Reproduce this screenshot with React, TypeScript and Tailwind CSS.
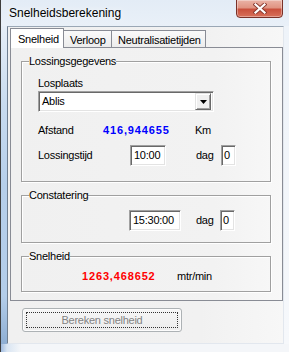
import React from 'react';

const sunken =
  'bg-white border border-t-[#a0a0a0] border-l-[#a0a0a0] border-r-white border-b-white shadow-[inset_1px_1px_0_#696969,inset_-1px_-1px_0_#e3e3e3]';

const GroupBox = ({ title, className = '', children }: { title: string; className?: string; children?: React.ReactNode }) => (
  <fieldset className={`ml-[10px] w-[250px] border border-[#a0a0a0] shadow-[inset_1px_1px_0_#fff,1px_1px_0_#fff] ${className}`}>
    <legend className="ml-[7px] h-[13px] leading-[13px]">{title}</legend>
    {children}
  </fieldset>
);

const CloseGlyph = () => (
  <svg width="14" height="11" viewBox="0 0 14 11">
    <path d="M2.5 1.5 L11.5 9.5 M11.5 1.5 L2.5 9.5" stroke="#8a3a30" strokeWidth="4" strokeLinecap="square" />
    <path d="M2.5 1.5 L11.5 9.5 M11.5 1.5 L2.5 9.5" stroke="#ffffff" strokeWidth="2.2" strokeLinecap="square" />
  </svg>
);

export default function App() {
  return (
    <div className="w-[289px] h-[352px] overflow-hidden flex flex-col border-l border-[#3d3d3d] bg-[#eef3f9] text-black text-[11px] tracking-[-0.25px] leading-[13px] font-['Liberation_Sans',Arial,sans-serif]">
      {/* title bar */}
      <div className="h-[26px] flex items-start shrink-0 bg-[linear-gradient(to_bottom,#e3ecf6,#e9f0f8)]">
        <span className="pl-[8px] pt-[6px] text-[12px] leading-[15px] tracking-normal [text-shadow:0_0_6px_#fff]">
          Snelheidsberekening
        </span>
        <div className="ml-auto mr-[6px] -mt-px w-[47px] h-[19px] rounded-b-[4px] border border-[#7a3128] bg-[linear-gradient(to_bottom,#eab3a6_0%,#e09482_45%,#c9503c_55%,#d8705a_100%)] shadow-[inset_0_0_0_1px_rgba(255,255,255,0.35)] flex items-center justify-center">
          <CloseGlyph />
        </div>
      </div>

      <div className="flex h-[318px] shrink-0">
        {/* left frame */}
        <div className="w-[6px] bg-[linear-gradient(to_bottom,#e6eef7_0%,#c8dbef_25%,#b6cfea_50%,#b3cde9_85%,#8eaed3_100%)]" />

        {/* client area */}
        <div className="w-[277px] flex flex-col border-l border-t border-l-[#6e7e90] border-t-[#9aa7b5] border-r border-b border-r-[#e2e7ee] border-b-[#e2e7ee] bg-[linear-gradient(to_right,#f0f0f0_0%,#f1f1f1_70%,#f7f7f7_100%)]">
          {/* tabs */}
          <div className="mt-[1px] ml-[2px] h-[19px] flex items-end">
            <div className="relative z-10 -mb-px h-[20px] w-[54px] border border-b-0 border-[#898c95] bg-white pl-[7px] pt-[4px]">
              Snelheid
            </div>
            <div className="-ml-px h-[17px] w-[49px] border border-b-0 border-[#898c95] bg-[linear-gradient(to_bottom,#fafafa,#ececec)] pl-[6px] pt-[3px]">
              Verloop
            </div>
            <div className="-ml-px h-[17px] w-[95px] border border-b-0 border-[#898c95] bg-[linear-gradient(to_bottom,#fafafa,#ececec)] pl-[6px] pt-[3px]">
              Neutralisatietijden
            </div>
          </div>

          {/* tab page */}
          <div className="ml-[2px] w-[273px] h-[254px] border border-[#898c95] bg-[linear-gradient(to_right,#f0f0f0_0%,#f2f2f2_75%,#f8f8f8_100%)] flex flex-col">
            <GroupBox title="Lossingsgegevens" className="mt-[7px] pb-[15px]">
              <div className="ml-[16px] mt-[9px]">Losplaats</div>
              <div className={`ml-[16px] mt-[1px] w-[176px] h-[21px] flex items-center ${sunken}`}>
                <span className="pl-[3px] flex-1">Ablis</span>
                <div className="mr-[2px] w-[16px] h-[17px] bg-[#f0f0f0] border border-t-[#e3e3e3] border-l-[#e3e3e3] border-r-[#696969] border-b-[#696969] shadow-[inset_1px_1px_0_#fff,inset_-1px_-1px_0_#a0a0a0] flex items-center justify-center">
                  <svg width="7" height="4" viewBox="0 0 7 4">
                    <path d="M0 0 H7 L3.5 4 Z" fill="#000" />
                  </svg>
                </div>
              </div>
              <div className="mt-[12px] flex h-[13px]">
                <span className="ml-[16px] w-[65px]">Afstand</span>
                <span className="w-[92px] font-bold text-[#0000ff] tracking-[0.85px]">416,944655</span>
                <span>Km</span>
              </div>
              <div className="mt-[8px] flex items-center">
                <span className="ml-[16px] w-[92px]">Lossingstijd</span>
                <div className={`w-[36px] h-[21px] flex items-center pl-[3px] ${sunken}`}>10:00</div>
                <span className="ml-[30px] w-[25px]">dag</span>
                <div className={`w-[15px] h-[21px] flex items-center pl-[2px] ${sunken}`}>0</div>
              </div>
            </GroupBox>

            <GroupBox title="Constatering" className="mt-[7px] pb-[11px]">
              <div className="mt-[8px] flex items-center">
                <div className={`ml-[107px] w-[52px] h-[21px] flex items-center pl-[3px] ${sunken}`}>15:30:00</div>
                <span className="ml-[15px] w-[24px]">dag</span>
                <div className={`w-[15px] h-[21px] flex items-center pl-[2px] ${sunken}`}>0</div>
              </div>
            </GroupBox>

            <GroupBox title="Snelheid" className="mt-[7px] pb-[8px]">
              <div className="mt-[7px] flex h-[13px]">
                <span className="ml-[60px] w-[95px] font-bold text-[#ff0000] tracking-[0.85px]">1263,468652</span>
                <span>mtr/min</span>
              </div>
            </GroupBox>
          </div>

          {/* button */}
          <div className="mt-[7px] ml-[14px] w-[160px] h-[24px] rounded-[3px] border border-[#adb2b5] bg-[linear-gradient(to_bottom,#f6f6f6,#ececec)] shadow-[inset_0_0_0_1px_#fcfcfc] p-[3px] flex">
            <div className="flex-1 border border-dotted border-[#333] flex items-center justify-center text-[#838383]">
              Bereken snelheid
            </div>
          </div>
        </div>

        {/* right frame */}
        <div className="w-[5px] bg-[linear-gradient(to_bottom,#eef3f9,#f6f8fb)]" />
      </div>

      {/* bottom frame */}
      <div className="h-[8px] shrink-0 bg-[linear-gradient(to_right,#9fbbe0_0px,#d9e5f2_6px,#f4f6f9_20px,#f4f6f9_100%)]" />
    </div>
  );
}
